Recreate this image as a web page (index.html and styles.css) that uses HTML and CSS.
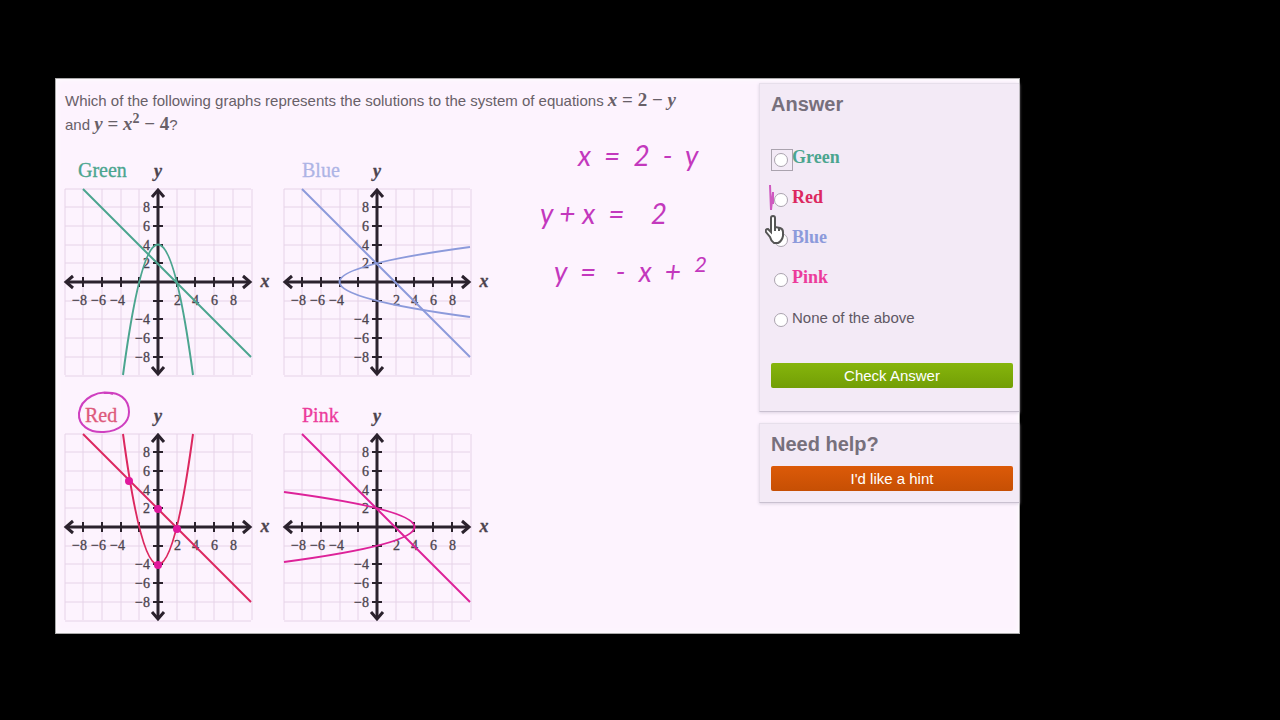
FILE: index.html
```html
<!DOCTYPE html>
<html lang="en">
<head>
  <meta charset="UTF-8">
  <title>Systems of equations</title>
  <meta name="viewport" content="width=device-width, initial-scale=1.0">
  <link rel="stylesheet" href="styles.css">
</head>
<body>
  <div class="screen">
    <main class="exercise">
      <p class="question">Which of the following graphs represents the solutions to the system of equations <span class="math"><i>x</i> = 2 − <i>y</i></span> and <span class="math"><i>y</i> = <i>x</i><sup>2</sup> − 4</span>?</p>
      <div class="work">
        <div class="graphs">
          <svg class="graph green" viewBox="0 0 219 245">
            <text class="name" x="13" y="32">Green</text>
            <g class="plot" transform="translate(93 137)">
              <path d="M-75 -93L93 75"/>
              <path d="M-35 93Q0 -168 35 93"/>
            </g>
          </svg>
          <svg class="graph blue" viewBox="0 0 219 245">
            <text class="name" x="18" y="32">Blue</text>
            <g class="plot" transform="translate(93 137)">
              <path d="M-75 -93L93 75"/>
              <path d="M93 -35Q-168 0 93 35"/>
            </g>
          </svg>
          <svg class="graph red" viewBox="0 0 219 245">
            <text class="name" x="20" y="32">Red</text>
            <g class="plot" transform="translate(93 137)">
              <path d="M-75 -93L93 75"/>
              <path d="M-35 -93Q0 168 35 -93"/>
            </g>
            <!-- pen marks -->
            <path class="pen" d="M48 4C34 -1 16 8 14 23C13 35 24 43 39 42C54 41 64 33 64 22C64 9 54 1 39 3"/>
            <g class="dots" transform="translate(93 137)">
              <circle cx="-29" cy="-46" r="4"/>
              <circle cx="0" cy="-18" r="4"/>
              <circle cx="19" cy="2" r="4"/>
              <circle cx="0" cy="38" r="4"/>
            </g>
          </svg>
          <svg class="graph pink" viewBox="0 0 219 245">
            <text class="name" x="18" y="32">Pink</text>
            <g class="plot" transform="translate(93 137)">
              <path d="M-75 -93L93 75"/>
              <path d="M-93 -35Q168 0 -93 35"/>
            </g>
          </svg>
        </div>
        <div class="notes">
          <p class="note-far">x  =  2  -  y</p>
          <p>y + x  =    2</p>
          <p class="note-near">y  =   -  x  +  <sup>2</sup></p>
        </div>
      </div>
    </main>
    <aside class="sidebar">
      <form class="card answer">
        <h2>Answer</h2>
        <ul class="options">
          <li class="focused"><input type="radio" name="answer" id="green"><label class="green" for="green">Green</label></li>
          <li>
            <input type="radio" name="answer" id="red"><label class="red" for="red">Red</label>
            <svg class="stroke" viewBox="0 0 6 28"><path d="M1 1L2 26L4 8L4 20"/></svg>
          </li>
          <li>
            <input type="radio" name="answer" id="blue"><label class="blue" for="blue">Blue</label>
            <svg class="cursor" viewBox="0 0 20 30"><path d="M6 17V3Q6 1 8 1T10 3V12L15 13Q18 14 18 17V21Q17 26 13 28H9Q6 26 5 22L1 17Q0 14 3 14Z"/><path d="M10 12V16M14 13V16"/></svg>
          </li>
          <li><input type="radio" name="answer" id="pink"><label class="pink" for="pink">Pink</label></li>
          <li><input type="radio" name="answer" id="none"><label class="plain" for="none">None of the above</label></li>
        </ul>
        <button type="button" class="check">Check Answer</button>
      </form>
      <section class="card help">
        <h2>Need help?</h2>
        <button type="button" class="hint">I'd like a hint</button>
      </section>
    </aside>
  </div>
  <script src="graphs.js"></script>
</body>
</html>
```
FILE: styles.css
```css
* {
  box-sizing: border-box;
}
body {
  margin: 0;
  padding: 78px 260px 86px 55px;
  background: #000;
  color: #555;
  font-family: "Liberation Sans", Arial, sans-serif;
}
h2, p, ul {
  margin: 0;
  padding: 0;
}
.screen {
  display: grid;
  grid-template-columns: 1fr 260px;
  background: #fdf3fe;
  border: 1px solid #aaa;
  box-shadow: inset 0 0 6px #fff;
}
.exercise {
  padding: 10px 0 0 9px;
}
.question {
  max-width: 636px;
  height: 56px;
  color: #686068;
  font-size: 15px;
  line-height: 24px;
}
.math {
  font-family: "Liberation Serif", serif;
  font-size: 19px;
  font-weight: bold;
  line-height: 0;
  white-space: nowrap;
}
.math sup {
  font-size: 14px;
}
.work {
  display: flex;
}
.graphs {
  display: grid;
  grid-template-columns: 219px 219px;
  grid-template-rows: 245px 243px;
}
.graph {
  display: block;
  width: 219px;
  height: 245px;
  font-family: "Liberation Serif", serif;
  overflow: visible;
}
.name {
  font-size: 20px;
  fill: currentColor;
  stroke: currentColor;
  stroke-width: 0.3;
}
.graph.blue .name {
  opacity: 0.7;
}
.grid {
  stroke: #e6d3e8;
  stroke-width: 1;
}
.axis {
  fill: none;
  stroke: #2b222d;
  stroke-width: 3;
}
.axis.marks {
  stroke-width: 2;
}
.tick, .letter {
  fill: #4c444e;
  stroke: #4c444e;
  stroke-width: 0.3;
  font-size: 14px;
  text-anchor: end;
}
.letter {
  font-size: 18px;
  font-style: italic;
  font-weight: bold;
  text-anchor: middle;
}
.plot {
  fill: none;
  stroke: currentColor;
  stroke-width: 2;
}
.green {
  color: #4ba58f;
}
.blue {
  color: #8c9adb;
}
.red {
  color: #dc2860;
}
.pink {
  color: #ec3b9b;
}
.graph.red .name {
  color: #dd5a7c;
}
.graph.pink .plot {
  color: #dd2299;
}
.pen {
  fill: none;
  stroke: #cf3fc0;
  stroke-width: 2;
}
.dots {
  fill: #e0189c;
}
.notes {
  margin-top: -19px;
  padding-left: 37px;
  color: #c338bd;
  font-family: Lato, sans-serif;
  font-size: 28px;
  font-style: italic;
  line-height: 58px;
}
.notes p {
  white-space: pre;
}
.note-far {
  padding-left: 38px;
}
.note-near {
  padding-left: 14px;
}
.notes sup {
  font-size: 22px;
  line-height: 0;
}
.sidebar {
  display: flex;
  flex-direction: column;
  gap: 11px;
  padding-top: 4px;
}
.card {
  padding: 8px 6px 10px 11px;
  background: #f3eaf6;
  border: 1px solid #e7dfeb;
  border-bottom-color: #c9c0d0;
  border-right: 0;
  box-shadow: 0 1px 3px #ddd3e2;
}
.answer {
  height: 329px;
}
.help {
  height: 80px;
}
h2 {
  color: #77707c;
  font-size: 20px;
  line-height: 24px;
}
.options {
  margin: 21px 0 26px;
  list-style: none;
}
.options li {
  position: relative;
  display: flex;
  align-items: center;
  height: 40px;
}
.options input {
  appearance: none;
  width: 14px;
  height: 14px;
  margin: 5px 4px 0 3px;
  background: #fff;
  border: 1px solid #aaa3ae;
  border-radius: 50%;
}
.focused::before {
  content: "";
  position: absolute;
  left: 0;
  top: 12px;
  width: 20px;
  height: 20px;
  border: 1px solid #aaa3ae;
}
.options label {
  font-family: "Liberation Serif", serif;
  font-size: 18px;
  font-weight: bold;
}
.options .plain {
  color: #5f5864;
  font-family: "Liberation Sans", Arial, sans-serif;
  font-size: 15px;
  font-weight: normal;
}
.stroke {
  position: absolute;
  left: -2px;
  top: 7px;
  width: 6px;
  height: 28px;
  fill: none;
  stroke: #cf5ac0;
  stroke-width: 2;
}
.cursor {
  position: absolute;
  left: -6px;
  top: -2px;
  width: 20px;
  height: 30px;
  fill: #fff;
  stroke: #555;
  stroke-width: 2;
}
button {
  display: block;
  width: 100%;
  height: 25px;
  padding: 0;
  color: #fff;
  font-family: inherit;
  font-size: 15px;
  border: 0;
  border-radius: 2px;
}
.check {
  background: linear-gradient(#86b50c, #729e05);
}
.hint {
  margin-top: 10px;
  background: linear-gradient(#dc5a08, #c64f04);
}
```
FILE: graphs.js
```js
const NS = 'http://www.w3.org/2000/svg';
const CX = 93;
const CY = 137;

function add(parent, name, attrs, text) {
  const el = document.createElementNS(NS, name);
  for (const key in attrs) el.setAttribute(key, attrs[key]);
  if (text) el.textContent = text;
  parent.appendChild(el);
}

// position of a value on the axis, from the origin
function pos(n) {
  return Math.round(n * 9.35);
}

document.querySelectorAll('.graph').forEach(function (svg) {
  const back = document.createElementNS(NS, 'g');
  back.setAttribute('transform', 'translate(' + CX + ' ' + CY + ')');

  let lines = '';
  let ticks = '';
  for (let n = -10; n <= 10; n += 2) {
    const p = pos(n);
    lines += 'M' + p + ' -93V93M-93 ' + p + 'H93';
    if (n !== 0 && Math.abs(n) < 10) ticks += 'M' + p + ' -5V5M-5 ' + p + 'H5';
  }
  add(back, 'path', { class: 'grid', d: lines });
  add(back, 'path', { class: 'axis marks', d: ticks });
  add(back, 'path', { class: 'axis', d: 'M-91 0H91M0 -91V91' });
  add(back, 'path', { class: 'axis', d: 'M-85 -6L-92 0L-85 6M85 -6L92 0L85 6M-6 -85L0 -92L6 -85M-6 85L0 92L6 85' });

  [-8, -6, -4, 2, 4, 6, 8].forEach(function (n) {
    const label = n < 0 ? '−' + -n : String(n);
    add(back, 'text', { class: 'tick', x: pos(n) + 4, y: 23 }, label);
  });
  [8, 6, 4, 2, -4, -6, -8].forEach(function (n) {
    const label = n < 0 ? '−' + -n : String(n);
    add(back, 'text', { class: 'tick', x: -8, y: pos(-n) + 5 }, label);
  });
  add(back, 'text', { class: 'letter', x: 0, y: -105 }, 'y');
  add(back, 'text', { class: 'letter', x: 107, y: 5 }, 'x');

  svg.insertBefore(back, svg.firstChild);
});
```
